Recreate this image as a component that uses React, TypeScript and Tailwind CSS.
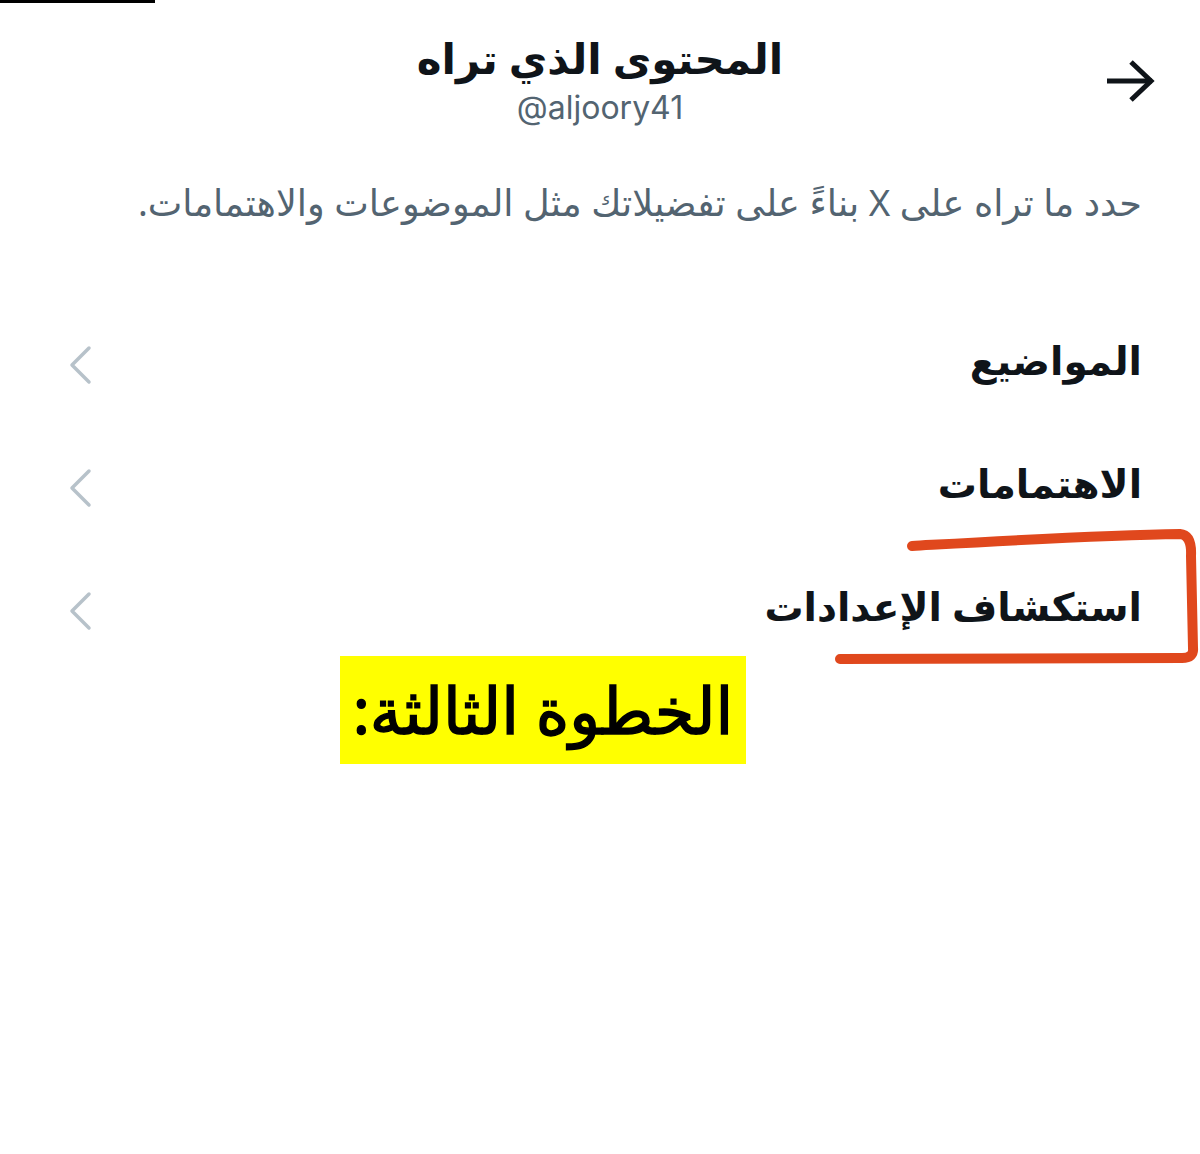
import React from 'react';

const ROWS = ['المواضيع', 'الاهتمامات', 'استكشاف الإعدادات'];

const ChevronLeft = () => (
  <svg className="mt-[8px]" width="26" height="40" viewBox="0 0 26 40" fill="none">
    <path d="M21 3 L4 20 L21 37" stroke="#b7c2ca" strokeWidth="3.5" strokeLinecap="round" strokeLinejoin="round" />
  </svg>
);

export default function App() {
  return (
    <div
      dir="rtl"
      className="relative w-[1200px] h-[1154px] bg-white overflow-hidden"
      style={{ fontFamily: '"Noto Sans", "DejaVu Sans", sans-serif' }}
    >
      {/* leftover bar from the screenshot crop */}
      <div className="absolute top-0 left-0 w-[155px] h-[3px] bg-black" />

      {/* header */}
      <div className="relative pt-[31px] flex flex-col items-center">
        <h1 className="text-[42px] leading-[54px] font-bold text-[#0f1419]">المحتوى الذي تراه</h1>
        <div dir="ltr" className="mt-[2px] text-[32px] leading-[42px] text-[#536471] font-[Inter]">@aljoory41</div>
        <button className="absolute right-[44px] top-[58px]">
          <svg width="52" height="44" viewBox="0 0 52 44" fill="none">
            <path d="M3 23 H48" stroke="#0f1419" strokeWidth="5" />
            <path d="M27 4 L47 23 L27 42" stroke="#0f1419" strokeWidth="5" strokeLinejoin="miter" />
          </svg>
        </button>
      </div>

      <p className="mt-[47px] pr-[58px] pl-[30px] text-[36.7px] leading-[52px] text-[#536471] whitespace-nowrap">
        حدد ما تراه على X بناءً على تفضيلاتك مثل الموضوعات والاهتمامات.
      </p>

      <div className="mt-[71px] flex flex-col">
        {ROWS.map((label) => (
          <div key={label} className="h-[123px] flex items-center justify-between pr-[58px] pl-[68px]">
            <span className="text-[39px] font-bold text-[#0f1419]">{label}</span>
            <ChevronLeft />
          </div>
        ))}
      </div>

      {/* annotation: red outline around third row */}
      <svg className="absolute inset-0 pointer-events-none" width="1200" height="1154" viewBox="0 0 1200 1154" fill="none">
        <path
          d="M912 546 C1000 541 1100 535 1180 534 Q1192 535 1191 556 L1193 648 Q1194 658 1182 658 L840 659"
          stroke="#e0481d"
          strokeWidth="10"
          strokeLinecap="round"
          strokeLinejoin="round"
        />
      </svg>

      {/* annotation: yellow label */}
      <div className="absolute left-[340px] top-[656px] w-[406px] h-[108px] bg-[#ffff00] flex items-center justify-center">
        <span className="text-[64px] leading-none whitespace-nowrap text-black [-webkit-text-stroke:1.5px_black]">
          الخطوة الثالثة:
        </span>
      </div>
    </div>
  );
}
